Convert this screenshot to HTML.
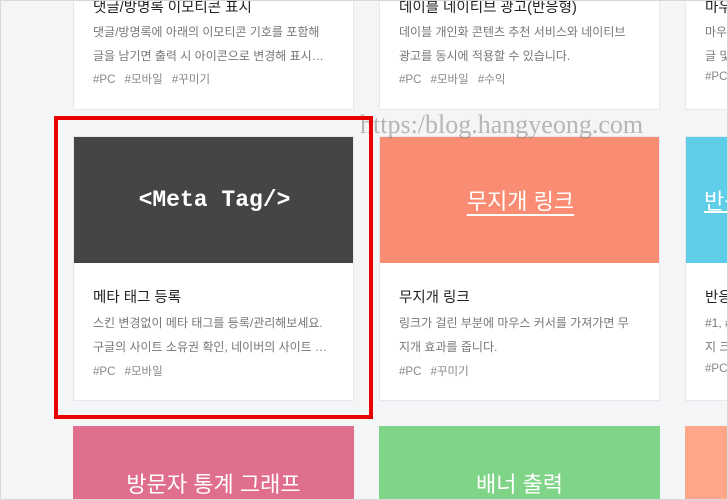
<!DOCTYPE html>
<html><head><meta charset="utf-8"><style>
*{margin:0;padding:0;box-sizing:border-box}
html,body{width:728px;height:500px;overflow:hidden}
body{background:#f3f5f7;font-family:"Liberation Sans","Noto Sans CJK KR",sans-serif;position:relative}
.card{position:absolute;width:281px;background:#fff;border:1px solid #e6e8eb;overflow:hidden}
.img{position:absolute;left:0;top:0;width:281px;height:126px;display:flex;align-items:center;justify-content:center;color:#fff;font-size:22px;white-space:nowrap;overflow:hidden}
.t{position:absolute;left:19px;font-size:14.5px;color:#222;white-space:nowrap}
.d{position:absolute;left:19px;width:250px;font-size:12px;color:#777;line-height:24px;white-space:nowrap;overflow:hidden}
.h{position:absolute;left:19px;font-size:11.5px;color:#888;word-spacing:6px;white-space:nowrap}
.r{width:43px;border-right:none}
</style></head><body>
<div class="card" style="left:73px;top:0;height:110px;border-top:none">
<div class="t" style="top:-4px">댓글/방명록 이모티콘 표시</div>
<div class="d" style="top:20px">댓글/방명록에 아래의 이모티콘 기호를 포함해<br>글을 남기면 출력 시 아이콘으로 변경해 표시…</div>
<div class="h" style="top:71px">#PC #모바일 #꾸미기</div></div>
<div class="card" style="left:379px;top:0;height:110px;border-top:none">
<div class="t" style="top:-4px">데이블 네이티브 광고(반응형)</div>
<div class="d" style="top:20px">데이블 개인화 콘텐츠 추천 서비스와 네이티브<br>광고를 동시에 적용할 수 있습니다.</div>
<div class="h" style="top:71px">#PC #모바일 #수익</div></div>
<div class="card r" style="left:685px;top:0;height:110px;border-top:none">
<div class="t" style="top:-4px">마우스</div>
<div class="d" style="top:20px;width:24px">마우스<br>글 및</div>
<div class="h" style="top:71px">#PC</div></div>
<div class="card" style="left:73px;top:136px;height:265px">
<div class="img" style="background:#454545;font-family:'Liberation Mono',monospace;font-weight:bold;font-size:23px">&lt;Meta Tag/&gt;</div>
<div class="t" style="top:149px">메타 태그 등록</div>
<div class="d" style="top:174px">스킨 변경없이 메타 태그를 등록/관리해보세요.<br>구글의 사이트 소유권 확인, 네이버의 사이트 …</div>
<div class="h" style="top:226px">#PC #모바일</div></div>
<div class="card" style="left:379px;top:136px;height:265px">
<div class="img" style="background:#fb8c74"><span style="text-decoration:underline;text-underline-offset:5px">무지개 링크</span></div>
<div class="t" style="top:149px">무지개 링크</div>
<div class="d" style="top:174px">링크가 걸린 부분에 마우스 커서를 가져가면 무<br>지개 효과를 줍니다.</div>
<div class="h" style="top:226px">#PC #꾸미기</div></div>
<div class="card r" style="left:685px;top:136px;height:265px">
<div class="img" style="background:#5ecde8;justify-content:flex-start;padding-left:18px;width:43px"><span style="text-decoration:underline">반응형</span></div>
<div class="t" style="top:149px">반응</div>
<div class="d" style="top:174px;width:24px">#1, #<br>지 크</div>
<div class="h" style="top:226px">#PC</div></div>
<div class="card" style="left:73px;top:426px;height:74px;border:none"><div class="img" style="background:#df6f8d;height:74px;align-items:flex-end;line-height:30px">방문자 통계 그래프</div></div>
<div class="card" style="left:379px;top:426px;height:74px;border:none"><div class="img" style="background:#7fd487;height:74px;align-items:flex-end;line-height:30px">배너 출력</div></div>
<div class="card" style="left:685px;top:426px;height:74px;width:43px;border:none"><div class="img" style="background:#fea58a;height:74px;width:43px"></div></div>
<div style="position:absolute;left:360px;top:110px;font-family:'Liberation Serif',serif;font-size:26px;color:rgba(120,120,120,.5);white-space:nowrap">https:/blog.hangyeong.com</div>
<div style="position:absolute;left:54px;top:116px;width:319px;height:303px;border:4px solid #e80000"></div>
<div style="position:absolute;left:0;top:0;width:728px;height:500px;border:1px solid #d8d8d8;pointer-events:none"></div>
</body></html>
